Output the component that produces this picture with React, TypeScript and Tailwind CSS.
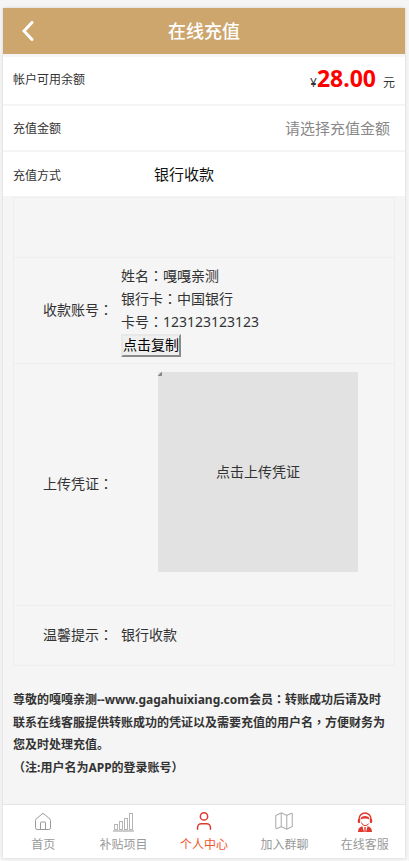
import { House, Map, User } from "lucide-react";

const FONT = "font-['Noto_Sans','Noto_Sans_CJK_SC',sans-serif]";

// full-width punctuation sits centred in the reference, the TC cut draws it that way
function Punc({ children }: { children: string }) {
  return <span className="font-['Noto_Sans_CJK_TC',sans-serif]">{children}</span>;
}

function BarsIcon() {
  return (
    <svg width="22" height="20" viewBox="0 0 22 20" fill="none" stroke="#b5b5b5" strokeWidth="1">
      <rect x="1.5" y="12.5" width="3" height="5" />
      <rect x="6.5" y="9.5" width="3" height="8" />
      <rect x="11.5" y="6.5" width="3" height="11" />
      <rect x="16.5" y="1.5" width="3" height="16" />
      <path d="M0 19h21" stroke="#cccccc" strokeWidth="2" />
    </svg>
  );
}

function AgentIcon() {
  return (
    <svg width="16" height="20" viewBox="0 0 16 20">
      <path d="M2 9V7a6 6 0 0 1 12 0v2" fill="none" stroke="#e0392f" strokeWidth="1.5" />
      <path d="M3.4 7.4C4 3 12 3 12.6 7.4 10 6.4 7 5.8 3.4 7.4z" fill="#e0392f" />
      <rect x="0.8" y="7" width="2.4" height="4" rx="1" fill="#e0392f" />
      <rect x="12.8" y="7" width="2.4" height="4" rx="1" fill="#e0392f" />
      <path d="M4.5 10.5c.8 2.4 2 3 3.5 3 1.4 0 2.6-.4 3.8-2" fill="none" stroke="#e0392f" strokeWidth="1" />
      <path d="M1 20c0-3.6 1.6-5.2 4.4-5.8L7 20zM15 20c0-3.6-1.6-5.2-4.4-5.8L9 20z" fill="#e0392f" />
      <rect x="7.3" y="15" width="1.4" height="5" fill="#e0392f" />
    </svg>
  );
}

function TabItem({
  label,
  active,
  children,
}: {
  label: string;
  active?: boolean;
  children: React.ReactNode;
}) {
  return (
    <div className="flex flex-1 flex-col items-center">
      <div className="flex h-[22px] items-end">{children}</div>
      <span className={`mt-1 text-[12px] leading-[18px] ${active ? "text-[#f0562d]" : "text-[#999999]"}`}>
        {label}
      </span>
    </div>
  );
}

export default function App() {
  return (
    <div className={`${FONT} h-[861px] w-[409px] overflow-hidden bg-[#f5f5f5] pt-2 pr-1 pb-[3px] pl-[3px] text-[#333333]`}>
      <div className="flex h-full flex-col shadow-[0_0_3px_rgba(0,0,0,0.15)]">
        <header className="flex h-[46px] shrink-0 items-center bg-[#cca66d]">
          <svg className="ml-[19px]" width="12" height="20" viewBox="0 0 12 20" fill="none" stroke="#ffffff" strokeWidth="3" strokeLinecap="round">
            <path d="M10 1.5 2 10l8 8.5" />
          </svg>
          <h1 className="ml-[134px] text-[18px] font-medium text-white">在线充值</h1>
        </header>

        <div className="mt-[3px] flex h-[47px] items-center justify-between bg-white pr-[10px] pb-px pl-[10px]">
          <span className="text-[12px]">帐户可用余额</span>
          <div className="flex items-baseline pb-[2px]">
            <span className="text-[12px]">¥</span>
            <span className="text-[23px] leading-none font-bold text-[#ff0000]">28.00</span>
            <span className="ml-[7px] text-[12px]">元</span>
          </div>
        </div>

        <div className="mt-[2px] flex h-[44px] items-center justify-between bg-white pt-[2px] pr-[15px] pl-[10px]">
          <span className="text-[12px]">充值金额</span>
          <span className="pb-[2px] text-[15px] text-[#888888]">请选择充值金额</span>
        </div>

        <div className="mt-[2px] flex h-[44px] items-center bg-white pt-[4px] pl-[10px]">
          <span className="w-[141px] text-[12px]">充值方式</span>
          <span className="pb-[4px] text-[15px] text-[#111111]">银行收款</span>
        </div>

        <div className="mx-[10px] mt-px flex h-[469px] shrink-0 flex-col border border-[#eeeeee] text-[14px]">
          <div className="h-[60px] border-b border-[#eeeeee]" />

          <div className="flex h-[106px] items-center border-b border-[#eeeeee]">
            <span className="w-[107px] pb-[2px] pl-[29px] leading-none whitespace-nowrap">
              收款账号<Punc>：</Punc>
            </span>
            <div className="flex flex-col items-start">
              <p className="pb-[2px] leading-[20px]">
                姓名<Punc>：</Punc>嘎嘎亲测
              </p>
              <p className="pb-[2px] leading-[20px]">
                银行卡<Punc>：</Punc>中国银行
              </p>
              <p className="pb-[2px] leading-[20px]">
                卡号<Punc>：</Punc>123123123123
              </p>
              <button className="h-[23px] border-2 border-t-[#e8e8e8] border-r-[#8a8a8a] border-b-[#8a8a8a] border-l-[#e8e8e8] bg-[#efefef] text-[14px] leading-none text-black">
                点击复制
              </button>
            </div>
          </div>

          <div className="flex h-[242px] items-center border-b border-[#eeeeee]">
            <span className="w-[144px] pb-[2px] pl-[29px] whitespace-nowrap">
              上传凭证<Punc>：</Punc>
            </span>
            <div className="relative mt-2 flex h-[200px] w-[200px] items-center justify-center self-start bg-[#e2e2e2] pb-[2px]">
              <span className="absolute top-0 left-0 h-1 w-1 bg-[linear-gradient(135deg,#e2e2e2_50%,#888888_50%)]" />
              点击上传凭证
            </div>
          </div>

          <div className="flex flex-1 items-center pb-[2px]">
            <span className="w-[107px] pl-[29px] whitespace-nowrap">
              温馨提示<Punc>：</Punc>
            </span>
            <span>银行收款</span>
          </div>
        </div>

        <div className="mt-[22px] pl-[10px] text-[12px] leading-[22px] font-bold">
          <p>
            尊敬的嘎嘎亲测--www.gagahuixiang.com会员<Punc>：</Punc>转账成功后请及时
          </p>
          <p>
            联系在线客服提供转账成功的凭证以及需要充值的用户名<Punc>，</Punc>方便财务为
          </p>
          <p>您及时处理充值。</p>
          <p>
            <Punc>（</Punc>注:用户名为APP的登录账号<Punc>）</Punc>
          </p>
        </div>

        <nav className="mt-auto flex h-[54px] shrink-0 items-center border-t border-[#e5e5e5] bg-white">
          <TabItem label="首页">
            <House size={20} strokeWidth={1.2} className="text-[#999999]" />
          </TabItem>
          <TabItem label="补贴项目">
            <BarsIcon />
          </TabItem>
          <TabItem label="个人中心" active>
            <User size={22} strokeWidth={1.6} className="text-[#e0392f]" />
          </TabItem>
          <TabItem label="加入群聊">
            <Map size={22} strokeWidth={1.2} className="text-[#b0b0b0]" />
          </TabItem>
          <TabItem label="在线客服">
            <AgentIcon />
          </TabItem>
        </nav>
      </div>
    </div>
  );
}
